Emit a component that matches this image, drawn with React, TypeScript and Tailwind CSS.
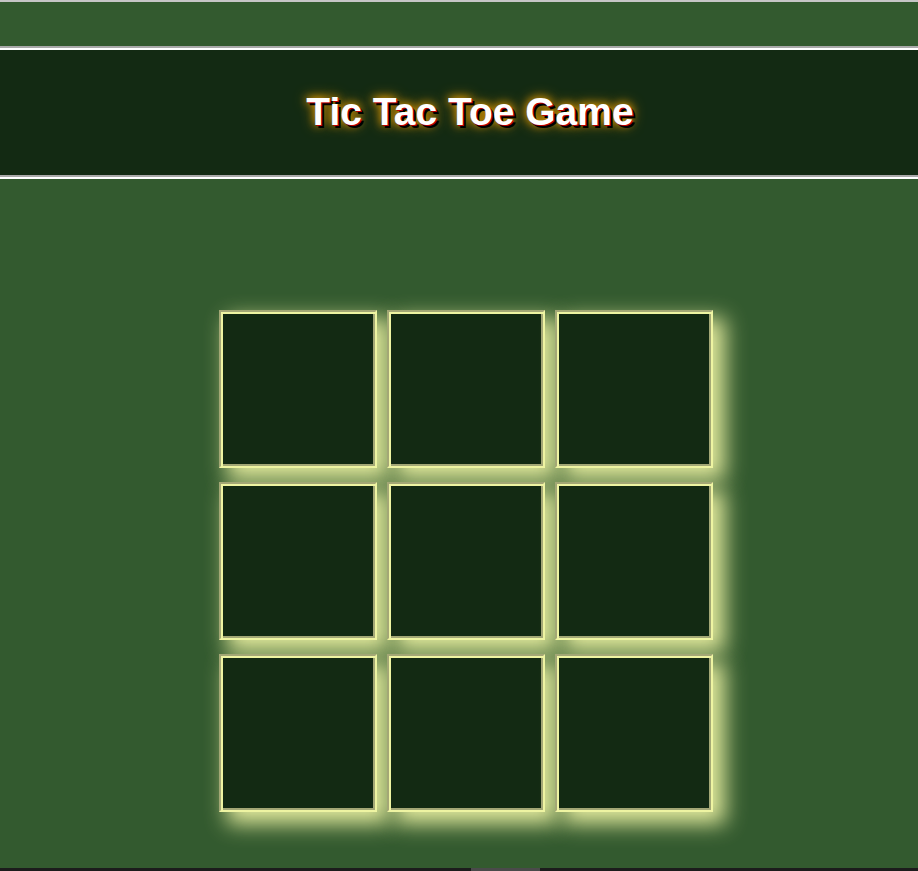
export default function App() {
  const cells = Array.from({ length: 9 });

  return (
    <div className="h-[871px] overflow-hidden flex flex-col bg-[#335a2f] font-['Liberation_Sans',Arial,sans-serif]">
      {/* top edge */}
      <div className="h-[2px] bg-[#c6c6c6]" />

      <div className="h-[44px]" />

      {/* Header */}
      <header>
        <div className="h-[2px] bg-[#a9a9a9]" />
        <div className="h-[2px] bg-white" />
        <div className="h-[125px] bg-[#132a13] flex items-center justify-center pl-[22px]">
          <h1 className="text-[39px] font-bold text-white [text-shadow:1px_1px_0_#c00000,3px_3px_0_#000,0_0_8px_#f5a800,0_0_14px_#c08000]">
            Tic Tac Toe Game
          </h1>
        </div>
        <div className="h-[2px] bg-[#a9a9a9]" />
        <div className="h-[2px] bg-white" />
      </header>

      {/* Board */}
      <main className="flex-1 pt-[131px]">
        <div className="ml-[219px] grid grid-cols-[158px_158px_158px] gap-x-[10px] gap-y-[14px] w-max">
          {cells.map((_, i) => (
            <button
              key={i}
              className="h-[158px] w-[158px] bg-[#132a13] border-2 border-t-[#a3a776] border-l-[#a3a776] border-b-[#eef4a2] border-r-[#eef4a2] shadow-[inset_2px_2px_0_#eef4a2,inset_-2px_-2px_0_#a3a776,10px_10px_20px_2px_#e0e89b]"
            />
          ))}
        </div>
      </main>

      {/* bottom scroll edge */}
      <div className="h-[3px] bg-[#1c1c1c] flex">
        <div className="ml-[471px] w-[69px] bg-[#4a4a4a]" />
      </div>
    </div>
  );
}
